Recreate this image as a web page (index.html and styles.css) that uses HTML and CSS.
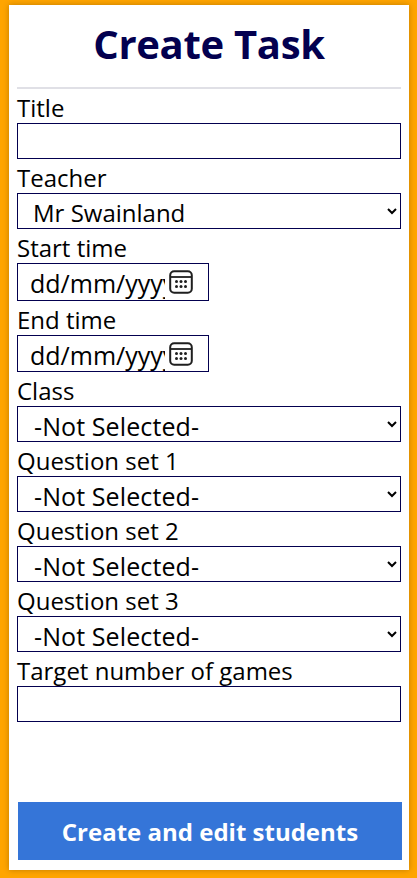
FILE: index.html
```html
<!DOCTYPE html>
<html>
    <head>
        <title>Create Task</title>
        <link rel="stylesheet" href="styles.css">
    </head>

    <body>
        <div class="card">
            <h1 class="pageTitle">Create Task</h1>
            <hr class="divider">

            <form class="taskForm">
                <label class="fieldLabel" for="title">Title</label>
                <input type="text" id="title" class="field">

                <label class="fieldLabel" for="teacher">Teacher</label>
                <select id="teacher" class="field selectField">
                    <option>Mr Swainland</option>
                </select>

                <label class="fieldLabel" for="start">Start time</label>
                <div class="dateWrap">
                    <input type="text" id="start" class="field dateField" placeholder="dd/mm/yyyy">
                    <svg class="calIcon" viewBox="0 0 24 24">
                        <rect x="1.2" y="1.2" width="21.6" height="21.6" rx="4" fill="none" stroke="#1f1f1f" stroke-width="2"/>
                        <path d="M1.5 7h21" stroke="#1f1f1f" stroke-width="1.8"/>
                        <g fill="#1f1f1f">
                            <circle cx="7.5" cy="11.5" r="1.5"/><circle cx="12" cy="11.5" r="1.5"/><circle cx="16.5" cy="11.5" r="1.5"/>
                            <circle cx="7.5" cy="16.5" r="1.5"/><circle cx="12" cy="16.5" r="1.5"/><circle cx="16.5" cy="16.5" r="1.5"/>
                        </g>
                    </svg>
                </div>

                <label class="fieldLabel" for="end">End time</label>
                <div class="dateWrap">
                    <input type="text" id="end" class="field dateField" placeholder="dd/mm/yyyy">
                    <svg class="calIcon" viewBox="0 0 24 24">
                        <rect x="1.2" y="1.2" width="21.6" height="21.6" rx="4" fill="none" stroke="#1f1f1f" stroke-width="2"/>
                        <path d="M1.5 7h21" stroke="#1f1f1f" stroke-width="1.8"/>
                        <g fill="#1f1f1f">
                            <circle cx="7.5" cy="11.5" r="1.5"/><circle cx="12" cy="11.5" r="1.5"/><circle cx="16.5" cy="11.5" r="1.5"/>
                            <circle cx="7.5" cy="16.5" r="1.5"/><circle cx="12" cy="16.5" r="1.5"/><circle cx="16.5" cy="16.5" r="1.5"/>
                        </g>
                    </svg>
                </div>

                <label class="fieldLabel" for="class">Class</label>
                <select id="class" class="field selectField emptySelect">
                    <option>-Not Selected-</option>
                </select>

                <label class="fieldLabel" for="set1">Question set 1</label>
                <select id="set1" class="field selectField emptySelect">
                    <option>-Not Selected-</option>
                </select>

                <label class="fieldLabel" for="set2">Question set 2</label>
                <select id="set2" class="field selectField emptySelect">
                    <option>-Not Selected-</option>
                </select>

                <label class="fieldLabel" for="set3">Question set 3</label>
                <select id="set3" class="field selectField emptySelect">
                    <option>-Not Selected-</option>
                </select>

                <label class="fieldLabel" for="target">Target number of games</label>
                <input type="text" id="target" class="field">
            </form>

            <button type="button" class="createButton">Create and edit students</button>
        </div>
    </body>
</html>
```

FILE: styles.css
```css
html, body{
    height: 100%;
}

body{
    margin: 0;
    padding: 5px 8px 8px 9px;
    box-sizing: border-box;
    background-color: orange;
    font-family: "Open Sans", "Noto Sans", sans-serif;
    overflow: hidden;
}

.card{
    background: white;
    height: 100%;
    padding: 0 8px;
    box-sizing: border-box;
    box-shadow: 0 0 6px rgba(0,0,0,0.25);
    display: flex;
    flex-direction: column;
}

/* Header */

.pageTitle{
    margin: 0;
    height: 82px;
    line-height: 78px;
    text-align: center;
    font-size: 40px;
    font-weight: 700;
    letter-spacing: -0.3px;
    color: #03004f;
}

.divider{
    margin: 0;
    border: none;
    height: 2px;
    background: #e0e0e6;
}

/* Form */

.taskForm{
    display: flex;
    flex-direction: column;
    align-items: flex-start;
}

.fieldLabel{
    height: 34px;
    line-height: 38px;
    font-size: 24px;
    color: black;
}

.field{
    width: 100%;
    height: 36px;
    margin: 0;
    padding: 3px 0 0 12px;
    box-sizing: border-box;
    border: 1px solid #03004f;
    border-radius: 0;
    background: white;
    font-family: inherit;
    font-size: 24px;
    color: black;
}

.selectField{
    padding: 1px 0 0 11px;
}

.emptySelect{
    font-size: 25px;
    letter-spacing: 0.1px;
    padding-left: 12px;
}

.dateWrap{
    position: relative;
    width: 192px;
    height: 37.5px;
}

.dateField{
    height: 100%;
    padding-left: 12px;
    padding-right: 43px;
    font-size: 25px;
}

.dateField::placeholder{
    color: black;
    opacity: 1;
}

.calIcon{
    position: absolute;
    top: 7px;
    left: 152px;
    width: 24px;
    height: 24px;
}

/* Button */

.createButton{
    margin: auto -1px 10px 1px;
    height: 58px;
    border: none;
    background: #3575d8;
    color: white;
    font-family: inherit;
    font-size: 24px;
    font-weight: 700;
}
```
